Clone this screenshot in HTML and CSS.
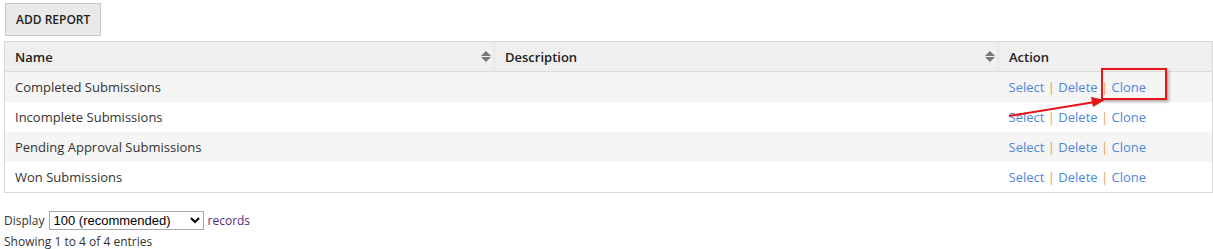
FILE: index.html
```html
<!DOCTYPE html>
<html lang="en">
<head>
  <meta charset="UTF-8" />
  <title>Reports</title>
  <link rel="stylesheet" href="styles.css">
</head>
<body>
  <div class="page">
    <button class="add-btn">ADD REPORT</button>

    <div class="table-wrap">
      <table class="reports">
        <thead>
          <tr>
            <th class="col-name">Name <span class="sort"></span></th>
            <th class="col-desc">Description <span class="sort"></span></th>
            <th class="col-action">Action</th>
          </tr>
        </thead>
        <tbody>
          <tr>
            <td>Completed Submissions</td>
            <td></td>
            <td class="actions"><a href="#">Select</a> <span class="sep">|</span> <a href="#">Delete</a> <span class="sep">|</span> <a href="#" class="highlight">Clone</a></td>
          </tr>
          <tr>
            <td>Incomplete Submissions</td>
            <td></td>
            <td class="actions"><a href="#">Select</a> <span class="sep">|</span> <a href="#">Delete</a> <span class="sep">|</span> <a href="#">Clone</a></td>
          </tr>
          <tr>
            <td>Pending Approval Submissions</td>
            <td></td>
            <td class="actions"><a href="#">Select</a> <span class="sep">|</span> <a href="#">Delete</a> <span class="sep">|</span> <a href="#">Clone</a></td>
          </tr>
          <tr>
            <td>Won Submissions</td>
            <td></td>
            <td class="actions"><a href="#">Select</a> <span class="sep">|</span> <a href="#">Delete</a> <span class="sep">|</span> <a href="#">Clone</a></td>
          </tr>
        </tbody>
      </table>

      <!-- annotation arrow -->
      <svg class="arrow" viewBox="0 0 110 30" width="110" height="30">
        <line x1="2" y1="26" x2="88" y2="12" stroke="#e8141a" stroke-width="2" />
        <polygon points="98,10 84,7 86,17" fill="#e8141a" />
      </svg>
    </div>

    <div class="length">
      Display
      <select>
        <option>100 (recommended)</option>
      </select>
      <span class="records">records</span>
    </div>
    <div class="info">Showing 1 to 4 of 4 entries</div>
  </div>
</body>
</html>
```

FILE: styles.css
```css
body {
  margin: 0;
  font-family: "Open Sans", sans-serif;
  font-size: 13px;
  color: #333;
  background: #fff;
}

.page {
  padding: 3px 0 0 4px;
}

.add-btn {
  display: block;
  margin-left: 1px;
  height: 33px;
  padding: 0 10px;
  background: #e9e9e9;
  border: 1px solid #c8c8c8;
  font-family: "Open Sans", sans-serif;
  font-size: 12px;
  font-weight: 600;
  color: #222;
}

.table-wrap {
  position: relative;
  margin-top: 5px;
}

.reports {
  width: 1209px;
  border-collapse: collapse;
  border: 1px solid #d9d9d9;
}

.reports th {
  height: 29px;
  padding: 0 10px;
  text-align: left;
  font-weight: 600;
  color: #222;
  background: #efefef;
  border-left: 1px solid #e3e3e3;
  border-bottom: 1px solid #dcdcdc;
  position: relative;
}

.reports th:first-child {
  border-left: none;
}

.col-name {
  width: 469px;
}

.col-desc {
  width: 483px;
}

.sort {
  position: absolute;
  right: 8px;
  top: 9px;
  width: 0;
  height: 0;
}

.sort::before,
.sort::after {
  content: "";
  position: absolute;
  left: -5px;
  border-left: 5px solid transparent;
  border-right: 5px solid transparent;
}

.sort::before {
  top: 0;
  border-bottom: 5px solid #777;
}

.sort::after {
  top: 6px;
  border-top: 5px solid #777;
}

.reports td {
  height: 30px;
  padding: 0 10px;
  color: #333;
}

.reports tbody tr:nth-child(odd) td {
  background: #f5f5f5;
}

.actions a {
  color: #4f86dc;
  text-decoration: none;
}

.actions .sep {
  color: #e0a050;
}

.actions .highlight {
  position: relative;
}

.actions .highlight::after {
  content: "";
  position: absolute;
  left: -11px;
  top: -10px;
  width: 62px;
  height: 28px;
  border: 2px solid #e8141a;
  box-shadow: 2px 2px 3px rgba(0, 0, 0, 0.3);
}

.arrow {
  position: absolute;
  left: 1003px;
  top: 49px;
}

.length {
  margin-top: 18px;
  display: flex;
  align-items: center;
  gap: 4px;
  font-size: 12px;
}

.length select {
  width: 155px;
  height: 19px;
  font-family: "Liberation Sans", Arial, sans-serif;
  font-size: 13px;
  color: #000;
  border: 1px solid #a9a9a9;
  background: #fff;
  padding: 0;
}

.records {
  color: #5a2a7a;
}

.info {
  margin-top: 3px;
  font-size: 12px;
}
```
